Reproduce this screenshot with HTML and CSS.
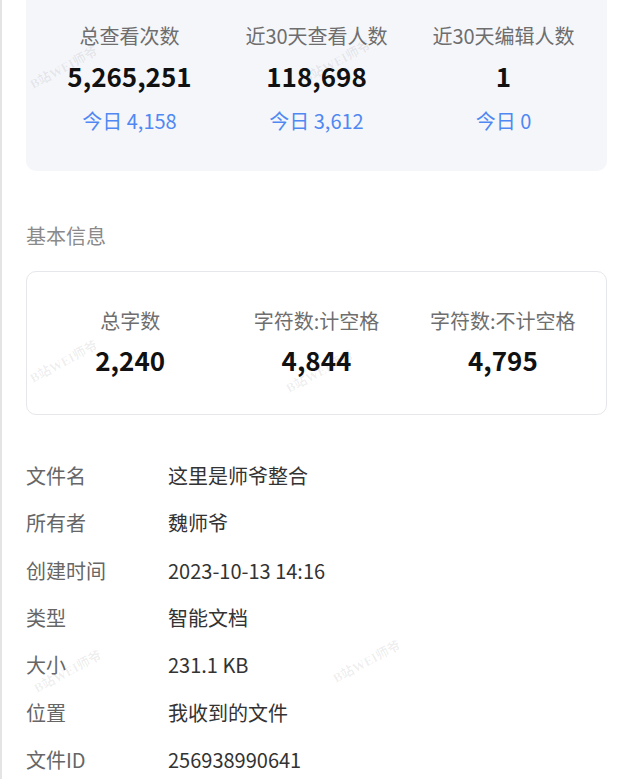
FILE: index.html
```html
<!DOCTYPE html>
<html lang="zh-CN">
<head>
<meta charset="utf-8">
<title>文档信息</title>
<link rel="stylesheet" href="styles.css">
</head>
<body>
  <section class="stats-card">
    <div class="stat">
      <div class="stat-label">总查看次数</div>
      <div class="stat-value">5,265,251</div>
      <div class="stat-today">今日 4,158</div>
    </div>
    <div class="stat">
      <div class="stat-label">近30天查看人数</div>
      <div class="stat-value">118,698</div>
      <div class="stat-today">今日 3,612</div>
    </div>
    <div class="stat">
      <div class="stat-label">近30天编辑人数</div>
      <div class="stat-value">1</div>
      <div class="stat-today">今日 0</div>
    </div>
  </section>

  <h2 class="section-title">基本信息</h2>

  <section class="count-card">
    <div class="stat">
      <div class="stat-label">总字数</div>
      <div class="stat-value">2,240</div>
    </div>
    <div class="stat">
      <div class="stat-label">字符数:计空格</div>
      <div class="stat-value">4,844</div>
    </div>
    <div class="stat">
      <div class="stat-label">字符数:不计空格</div>
      <div class="stat-value">4,795</div>
    </div>
  </section>

  <dl class="info-list">
    <div class="info-row"><dt>文件名</dt><dd>这里是师爷整合</dd></div>
    <div class="info-row"><dt>所有者</dt><dd>魏师爷</dd></div>
    <div class="info-row"><dt>创建时间</dt><dd>2023-10-13 14:16</dd></div>
    <div class="info-row"><dt>类型</dt><dd>智能文档</dd></div>
    <div class="info-row"><dt>大小</dt><dd>231.1 KB</dd></div>
    <div class="info-row"><dt>位置</dt><dd>我收到的文件</dd></div>
    <div class="info-row"><dt>文件ID</dt><dd>256938990641</dd></div>
  </dl>

  <div class="watermarks" aria-hidden="true">
    <span class="wm wm-1">B站WEI师爷</span>
    <span class="wm wm-2">B站WEI师爷</span>
    <span class="wm wm-4">B站WEI师爷</span>
    <span class="wm wm-5">B站WEI师爷</span>
    <span class="wm wm-7">B站WEI师爷</span>
    <span class="wm wm-8">B站WEI师爷</span>
  </div>
</body>
</html>
```

FILE: styles.css
```css
* {
  box-sizing: border-box;
}

html,
body {
  margin: 0;
}

body {
  position: relative;
  min-height: 100vh;
  overflow: hidden;
  padding: 0 15px 0 24px;
  border-left: 2px solid #e4e4e4;
  background: #ffffff;
  font-family: "Noto Sans CJK SC", "Noto Sans", sans-serif;
  color: #333333;
}

/* ---- headline counters ---- */
.stats-card {
  display: grid;
  grid-template-columns: repeat(3, 1fr);
  padding: 22px 10px 36px;
  background: #f5f6fa;
  border-radius: 0 0 10px 10px;
}

.stat {
  text-align: center;
}

.stat-label {
  font-size: 20px;
  line-height: 28px;
  color: #6e6e6e;
  white-space: nowrap;
}

.stat-value {
  margin-top: 8px;
  font-size: 26px;
  line-height: 36px;
  font-weight: 700;
  color: #111111;
}

.stat-today {
  margin-top: 13px;
  font-size: 20px;
  line-height: 28px;
  color: #4f88f2;
}

/* ---- basic info ---- */
.section-title {
  margin: 51px 0 0;
  font-size: 20px;
  line-height: 28px;
  font-weight: 400;
  color: #8a8a8a;
}

.count-card {
  display: grid;
  grid-template-columns: repeat(3, 1fr);
  margin-top: 21px;
  padding: 35px 10px 36px;
  border: 1px solid #e6e7eb;
  border-radius: 10px;
}

.count-card .stat-value {
  margin-top: 7px;
}

.info-list {
  margin: 37.5px 0 0;
}

.info-row {
  display: grid;
  grid-template-columns: 142px 1fr;
  padding: 9.67px 0;
  font-size: 20px;
  line-height: 28px;
}

.info-row dt {
  color: #666666;
}

.info-row dd {
  margin: 0;
  color: #333333;
}

/* ---- tiled watermark ---- */
.watermarks {
  position: absolute;
  inset: 0;
  pointer-events: none;
}

.wm {
  position: absolute;
  font-family: "Liberation Serif", "Noto Sans CJK SC", serif;
  font-weight: 700;
  font-size: 13px;
  line-height: 16px;
  color: rgba(0, 0, 0, 0.07);
  white-space: nowrap;
  transform: translate(-50%, -50%) rotate(-28deg);
}

.wm-1 { left: 62px;  top: 68px; }
.wm-2 { left: 335px; top: 62px; }
.wm-4 { left: 62px;  top: 362px; }
.wm-5 { left: 318px; top: 372px; }
.wm-7 { left: 66px;  top: 672px; }
.wm-8 { left: 365px; top: 662px; }
```
